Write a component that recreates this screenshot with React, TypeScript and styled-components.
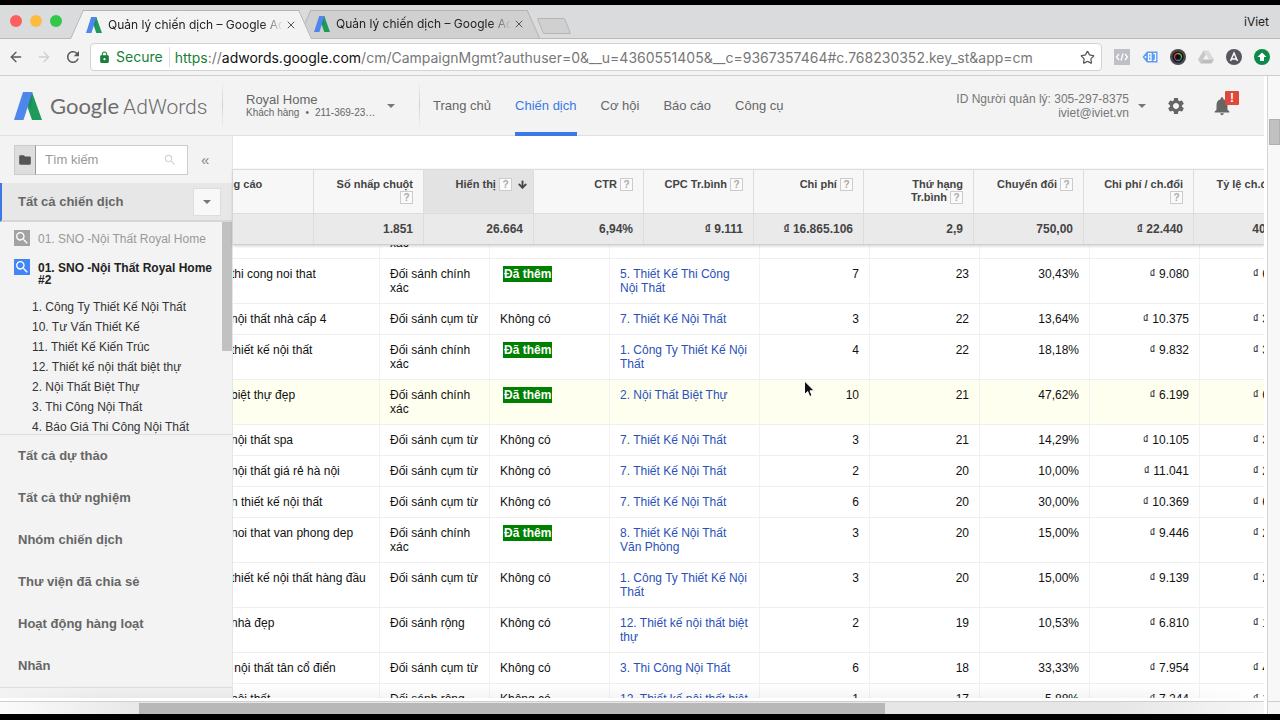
import React from "react";
import styled, { createGlobalStyle, css } from "styled-components";
import { ArrowDown, ArrowLeft, ArrowRight, Star, X } from "lucide-react";
import { MdFolder, MdLock, MdNotifications, MdRefresh, MdSearch, MdSettings } from "react-icons/md";

const GlobalStyle = createGlobalStyle`
  * { box-sizing: border-box; }
  body { margin: 0; background: #000; font-family: "Liberation Sans", Arial, sans-serif; font-size: 12px; }
  button, input { font-family: inherit; }
  button { padding: 0; border: 0; background: none; color: inherit; }
  a { text-decoration: none; color: inherit; }
  svg { display: block; flex: none; }
`;

const BLUE = "#3b78e7";
const UI_FONT = `Inter, "Liberation Sans", sans-serif`;

/* ---------- browser chrome ---------- */

const Screen = styled.div`
  display: flex;
  flex-direction: column;
  height: 100vh;
  padding: 5px 0 6px;
  background: #000;
  overflow: hidden;
`;

const TabStrip = styled.div`
  display: flex;
  flex: none;
  align-items: flex-end;
  height: 34px;
  padding: 0 11px 0 10px;
  background: #dadbdd;
  border-bottom: 1px solid #b9b9b9;
  font-family: ${UI_FONT};
`;

const Lights = styled.div`
  display: flex;
  gap: 8px;
  width: 60px;
  height: 23px;
`;

const Light = styled.button<{ $color: string }>`
  width: 12px;
  height: 12px;
  border-radius: 50%;
  background: ${(p) => p.$color};
`;

const Tab = styled.div<{ $active?: boolean }>`
  position: relative;
  z-index: ${(p) => (p.$active ? 2 : 1)};
  display: flex;
  align-items: center;
  gap: 6px;
  width: 242px;
  height: ${(p) => (p.$active ? "29px" : "28px")};
  padding: 0 15px 0 16px;
  margin-bottom: ${(p) => (p.$active ? "-1px" : 0)};
  color: #222;

  & + & { margin-left: -14px; }

  &::before, &::after {
    content: "";
    position: absolute;
    z-index: -1;
    top: 0;
    bottom: 0;
    width: 50%;
    background: ${(p) => (p.$active ? "#f3f3f3" : "#d0d0d0")};
    border-top: 1px solid #b4b4b4;
  }
  &::before { left: 0; border-left: 1px solid #b4b4b4; transform: skewX(-24deg); transform-origin: bottom; }
  &::after { right: 0; border-right: 1px solid #b4b4b4; transform: skewX(24deg); transform-origin: bottom; }
`;

const TabTitle = styled.span`
  flex: 1;
  min-width: 0;
  overflow: hidden;
  white-space: nowrap;
  font-size: 12px;
  line-height: 16px;
  mask-image: linear-gradient(90deg, #000 88%, transparent);
`;

const TabClose = styled.button`
  margin-left: -4px;
  color: #555;
`;

const NewTab = styled.button`
  width: 28px;
  height: 16px;
  margin: 0 0 4px;
  background: #d0d0d0;
  border: 1px solid #b4b4b4;
  border-radius: 2px;
  transform: skewX(22deg);
`;

const Profile = styled.button`
  margin-left: auto;
  height: 33px;
  font-size: 12px;
  color: #222;
`;

const Toolbar = styled.div`
  display: flex;
  flex: none;
  align-items: center;
  gap: 12px;
  height: 37px;
  padding: 0 10px 0 8px;
  background: #f3f3f3;
  border-bottom: 1px solid #cfcfcf;
  font-family: ${UI_FONT};
`;

const ToolButton = styled.button<{ $dim?: boolean }>`
  color: ${(p) => (p.$dim ? "#d0d0d0" : "#5a5a5a")};
`;

const Address = styled.div`
  display: flex;
  flex: 1;
  align-items: center;
  min-width: 0;
  height: 28px;
  margin-left: -4px;
  padding: 0 6px 0 7px;
  background: #fff;
  border: 1px solid #d3d3d3;
  border-radius: 4px;
  font-size: 14px;
  color: #777;
`;

const Secure = styled.span`
  margin-left: 5px;
  padding-right: 6px;
  border-right: 1px solid #ddd;
  color: #188038;
  line-height: 20px;
`;

const Url = styled.span`
  flex: 1;
  min-width: 0;
  margin-left: 5px;
  overflow: hidden;
  white-space: nowrap;
  b { font-weight: 400; color: #111; }
  i { font-style: normal; color: #188038; }
`;

/* ---------- page frame ---------- */

const Viewport = styled.div`
  display: grid;
  flex: 1;
  min-height: 0;
  grid-template-columns: minmax(0, 1fr) 13px;
  grid-template-rows: minmax(0, 1fr) 13px;
  background: #fff;
`;

const Page = styled.div`
  position: relative;
  display: flex;
  flex-direction: column;
  margin: 0 3px 3px 0;
  overflow: hidden;
`;

const VTrack = styled.div`
  border-left: 1px solid #d4d4d4;
  background: #f8f8f8;
  padding-top: 43px;
`;

const VThumb = styled.div`
  height: 26px;
  margin-left: 1px;
  background: #c1c1c1;
  border: 1px solid #b0b0b0;
`;

const HTrack = styled.div`
  margin-right: 3px;
  border-top: 1px solid #cfcfcf;
  background: linear-gradient(90deg, #fbfbfb, #e6e6e6 12%, #e6e6e6 88%, #f6f6f6);
`;

const HThumb = styled.div`
  width: 59%;
  height: 11px;
  margin: 1px 0 0 11%;
  background: #b8b8b8;
`;

const Corner = styled.div`
  border-top: 1px solid #cfcfcf;
  border-left: 1px solid #cfcfcf;
  background: #f6f6f6;
`;

/* ---------- application header ---------- */

const Header = styled.header`
  display: flex;
  flex: none;
  height: 60px;
  background: #f3f3f3;
  border-bottom: 1px solid #e0e0e0;
  color: #666;
`;

const Divider = styled.div`
  width: 1px;
  margin: 4px 0 6px;
  background: linear-gradient(#f3f3f3, #d2d2d2 50%, #f3f3f3);
`;

const Brand = styled.a`
  display: flex;
  align-items: center;
  gap: 8px;
  width: 222px;
  padding-left: 14px;
  color: #6c6c6c;
  white-space: nowrap;
`;

const BrandName = styled.span`
  display: flex;
  align-items: baseline;
  gap: 4px;
`;

const Google = styled.span`
  font-family: Lato, sans-serif;
  font-size: 22px;
  line-height: 28px;
`;

const Product = styled.span`
  font-family: Roboto, sans-serif;
  font-size: 21px;
  font-weight: 300;
`;

const Account = styled.button`
  display: flex;
  align-items: center;
  justify-content: space-between;
  width: 196px;
  padding: 0 24px 0 23px;
  text-align: left;
`;

const AccountName = styled.span`
  display: block;
  font-size: 13px;
  line-height: 14px;
`;

const AccountMeta = styled.span`
  display: flex;
  gap: 6px;
  font-size: 10px;
  line-height: 12px;
`;

const Caret = styled.span`
  flex: none;
  border: 4px solid transparent;
  border-top: 4px solid #777;
  border-bottom: 0;
`;

const MainNav = styled.nav`
  display: flex;
  gap: 24px;
  padding-left: 13px;
  margin-bottom: -1px;
`;

const MainLink = styled.a<{ $active?: boolean }>`
  display: flex;
  align-items: center;
  padding-top: 3px;
  font-size: 13px;
  border-bottom: 4px solid ${(p) => (p.$active ? BLUE : "transparent")};
  color: ${(p) => (p.$active ? BLUE : "#666")};
`;

const Manager = styled.button`
  display: flex;
  align-items: center;
  gap: 9px;
  margin-left: auto;
  color: #777;
  font-size: 12px;
  line-height: 14px;
  text-align: right;
`;

const IconButton = styled.button`
  position: relative;
  width: 20px;
  margin-left: 20px;
  color: #666;
  & + & { margin: 0 33px 0 25px; }
`;

const Alert = styled.span`
  position: absolute;
  top: 15px;
  right: -8px;
  width: 14px;
  height: 14px;
  border-radius: 1px;
  background: #e0483c;
  color: #fff;
  font-weight: 700;
  font-size: 12px;
  line-height: 14px;
`;

/* ---------- sidebar ---------- */

const Body = styled.div`
  display: flex;
  flex: 1;
  min-height: 0;
`;

const Sidebar = styled.aside`
  display: flex;
  flex-direction: column;
  flex: none;
  width: 233px;
  background: #f3f3f3;
  border-right: 1px solid #e6e6e6;
`;

const SearchRow = styled.div`
  display: flex;
  align-items: center;
  flex: none;
  height: 47px;
  padding: 0 0 0 14px;
  color: #888;
`;

const FolderButton = styled.button`
  display: grid;
  place-items: center;
  width: 22px;
  height: 30px;
  background: #dedede;
  border: 1px solid #ccc;
  border-right-color: #999;
  color: #555;
`;

const SearchBox = styled.label`
  display: flex;
  align-items: center;
  width: 152px;
  height: 30px;
  padding: 0 10px 0 9px;
  background: #fff;
  border: 1px solid #ccc;
  border-left: 0;
  color: #d5d5d5;
`;

const SearchInput = styled.input`
  flex: 1;
  min-width: 0;
  padding: 0;
  border: 0;
  outline: 0;
  background: none;
  font-size: 13px;
  &::placeholder { color: #999; opacity: 1; }
`;

const Collapse = styled.button`
  margin-left: 13px;
  font-size: 15px;
  line-height: 20px;
`;

const Selected = styled.div`
  display: flex;
  flex: none;
  align-items: center;
  justify-content: space-between;
  height: 39px;
  padding: 0 11px 0 16px;
  background: #e7e7e7;
  border-left: 2px solid ${BLUE};
  border-bottom: 2px solid #d6d6d6;
  font-size: 13px;
  font-weight: 700;
  color: #666;
`;

const MenuButton = styled.button`
  display: grid;
  place-items: center;
  width: 28px;
  height: 28px;
  background: #f8f8f8;
  border: 1px solid #ddd;
`;

const Tree = styled.div`
  display: flex;
  flex: none;
  height: 213px;
  overflow: hidden;
  border-bottom: 1px solid #dedede;
`;

const TreeItems = styled.div`
  flex: 1;
  padding: 8px 6px 0 14px;
`;

const TreeThumb = styled.div`
  width: 10px;
  height: 129px;
  background: #c1c1c1;
`;

const Campaign = styled.a<{ $current?: boolean }>`
  display: flex;
  gap: 8px;
  margin-bottom: ${(p) => (p.$current ? "11px" : "12px")};
  line-height: ${(p) => (p.$current ? "12px" : "16px")};
  font-weight: ${(p) => (p.$current ? 700 : 400)};
  color: ${(p) => (p.$current ? "#222" : "#999")};
  span { padding-top: ${(p) => (p.$current ? "3px" : "1px")}; }
`;

const CampaignIcon = styled.i<{ $current?: boolean }>`
  display: grid;
  place-items: center;
  flex: none;
  width: 16px;
  height: 16px;
  background: ${(p) => (p.$current ? "#4285f4" : "#a3a3a3")};
  color: #fff;
`;

const Groups = styled.ul`
  list-style: none;
  margin: 0;
  padding: 0 0 0 18px;
  line-height: 20px;
  color: #333;
  white-space: nowrap;
`;

const SideLinks = styled.nav`
  flex: none;
  border-bottom: 1px solid #dedede;
`;

const SideLink = styled.a`
  display: block;
  padding-left: 18px;
  font-size: 13px;
  font-weight: 700;
  line-height: 42px;
  color: #666;
`;

/* ---------- report ---------- */

const Report = styled.main`
  flex: 1;
  min-width: 0;
  display: flex;
  flex-direction: column;
  padding-top: 33px;
  background: #fff;
`;

const HeadClip = styled.div`
  flex: none;
  position: relative;
  z-index: 1;
  overflow: hidden;
  border-top: 1px solid #ddd;
  border-bottom: 1px solid #cfcfcf;
  box-shadow: 0 1px 3px rgba(0, 0, 0, 0.2);
`;

const BodyClip = styled.div`
  flex: 1;
  min-height: 0;
  overflow: hidden;
`;

const tableBase = css`
  table-layout: fixed;
  border-collapse: separate;
  border-spacing: 0;
`;

const HeadTable = styled.table`
  ${tableBase}
  width: 1141px;
  margin-left: -70px;
  th, td { border-right: 1px solid #ddd; font-weight: 700; text-align: right; }
  th:first-child { text-align: left; }
`;

const HeadCell = styled.th<{ $sorted?: boolean }>`
  height: 44px;
  padding: 8px ${(p) => (p.$sorted ? "5px" : "10px")} 0 10px;
  vertical-align: top;
  font-size: 11px;
  line-height: 13px;
  color: #444;
  background: ${(p) => (p.$sorted ? "#e3e3e3" : "#f7f7f7")};
  border-bottom: 1px solid #ddd;
`;

const TotalCell = styled.td`
  height: 30px;
  padding: 0 10px;
  background: #eaeaea;
  color: #444;
`;

const Help = styled.button`
  display: inline-block;
  vertical-align: top;
  width: 13px;
  height: 13px;
  border: 1px solid #ccc;
  background: #fafafa;
  font-size: 10px;
  font-weight: 700;
  line-height: 11px;
  color: #aaa;
  text-align: center;
`;

const SortIcon = styled(ArrowDown)`
  display: inline-block;
  vertical-align: top;
  margin: 1px 0 0 5px;
`;

const DataTable = styled.table`
  ${tableBase}
  width: 1089px;
  margin: -31px 0 0 -12px;
`;

const Row = styled.tr<{ $hover?: boolean }>`
  background: ${(p) => (p.$hover ? "#fffff0" : "#fff")};
`;

const Cell = styled.td<{ $num?: boolean }>`
  padding: 8px 10px;
  vertical-align: top;
  text-align: ${(p) => (p.$num ? "right" : "left")};
  line-height: 14px;
  color: #111;
  border-right: 1px solid #f2f2f2;
  border-bottom: 1px solid #efefef;
  a { color: #2a51b8; }
`;

const Added = styled.strong`
  margin-left: 3px;
  padding: 1px;
  background: #008000;
  color: #fff;
`;

const Pointer = styled.svg`
  position: absolute;
  left: 803px;
  top: 304px;
`;

const BottomShade = styled.div`
  position: absolute;
  left: 0;
  right: 0;
  bottom: 0;
  height: 14px;
  background: linear-gradient(rgba(0, 0, 0, 0), rgba(0, 0, 0, 0.04));
  mask-image: linear-gradient(90deg, transparent, #000 8%, #000 92%, transparent);
  pointer-events: none;
`;

/* ---------- data ---------- */

const links = ["Trang chủ", "Chiến dịch", "Cơ hội", "Báo cáo", "Công cụ"];
const sideLinks = ["Tất cả dự thảo", "Tất cả thử nghiệm", "Nhóm chiến dịch", "Thư viện đã chia sẻ", "Hoạt động hàng loạt", "Nhãn"];
const groups = [
  "1. Công Ty Thiết Kế Nội Thất",
  "10. Tư Vấn Thiết Kế",
  "11. Thiết Kế Kiến Trúc",
  "12. Thiết kế nội thất biệt thự",
  "2. Nội Thất Biệt Thự",
  "3. Thi Công Nội Thất",
  "4. Báo Giá Thi Công Nội Thất",
];

const metrics: [string, string][] = [
  ["Số nhấp chuột", "1.851"],
  ["Hiển thị", "26.664"],
  ["CTR", "6,94%"],
  ["CPC Tr.bình", "₫ 9.111"],
  ["Chi phí", "₫ 16.865.106"],
  ["Thứ hạng Tr.bình", "2,9"],
  ["Chuyển đổi", "750,00"],
  ["Chi phí / ch.đổi", "₫ 22.440"],
  ["Tỷ lệ ch.đổi", "40,52%"],
];

const EXACT = "Đối sánh chính xác";
const PHRASE = "Đối sánh cụm từ";
const BROAD = "Đối sánh rộng";

type Term = [string, string, boolean | null, string, string, string, string, string, string];
const terms: Term[] = [
  ["", EXACT, null, "", "", "", "", "", ""],
  ["thi cong noi that", EXACT, true, "5. Thiết Kế Thi Công Nội Thất", "7", "23", "30,43%", "₫ 9.080", "₫ 63.562"],
  ["nội thất nhà cấp 4", PHRASE, false, "7. Thiết Kế Nội Thất", "3", "22", "13,64%", "₫ 10.375", "₫ 31.124"],
  ["thiết kế nội thất", EXACT, true, "1. Công Ty Thiết Kế Nội Thất", "4", "22", "18,18%", "₫ 9.832", "₫ 39.330"],
  ["biệt thự đẹp", EXACT, true, "2. Nội Thất Biệt Thự", "10", "21", "47,62%", "₫ 6.199", "₫ 61.991"],
  ["nội thất spa", PHRASE, false, "7. Thiết Kế Nội Thất", "3", "21", "14,29%", "₫ 10.105", "₫ 30.316"],
  ["nội thất giá rẻ hà nội", PHRASE, false, "7. Thiết Kế Nội Thất", "2", "20", "10,00%", "₫ 11.041", "₫ 22.082"],
  ["n thiết kế nội thất", PHRASE, false, "7. Thiết Kế Nội Thất", "6", "20", "30,00%", "₫ 10.369", "₫ 62.213"],
  ["noi that van phong dep", EXACT, true, "8. Thiết Kế Nội Thất Văn Phòng", "3", "20", "15,00%", "₫ 9.446", "₫ 28.339"],
  ["thiết kế nội thất hàng đầu", PHRASE, false, "1. Công Ty Thiết Kế Nội Thất", "3", "20", "15,00%", "₫ 9.139", "₫ 27.418"],
  ["nhà đẹp", BROAD, false, "12. Thiết kế nội thất biệt thự", "2", "19", "10,53%", "₫ 6.810", "₫ 13.620"],
  ["\u00a0nội thất tân cổ điển", PHRASE, false, "3. Thi Công Nội Thất", "6", "18", "33,33%", "₫ 7.954", "₫ 47.724"],
  ["nội thất", BROAD, false, "12. Thiết kế nội thất biệt thự", "1", "17", "5,88%", "₫ 7.244", "₫ 17.244"],
];

/* ---------- drawings ---------- */

const AdWordsMark = ({ size }: { size: number }) => (
  <svg width={size} height={size} viewBox="0 0 28 28" aria-hidden="true">
    <path d="M10 0h8l10 28H18L12 11z" fill="#1e9b5c" />
    <path d="M9 0h9.500L9.500 28H0z" fill="#4e86ec" />
    <path d="M18.300 0.500L14 13.500l3 3z" fill="#0f7a4c" opacity="0.400" />
  </svg>
);

const Extensions = () => (
  <>
    <ToolButton aria-label="Code">
      <svg width="16" height="16" viewBox="0 0 16 16">
        <rect width="16" height="16" fill="#bfc0c6" />
        <path d="M5 5L2.500 8 5 11M11 5l2.500 3L11 11M9 4.500L7 11.500" fill="none" stroke="#fff" strokeWidth="1.300" />
      </svg>
    </ToolButton>
    <ToolButton aria-label="Tag Assistant">
      <svg width="16" height="16" viewBox="0 0 16 16">
        <path d="M0.500 8L5 2.500h10.500v11H5z" fill="#5c9df2" />
        <circle cx="3.500" cy="8" r="0.900" fill="#fff" />
        <path d="M6.500 4.700h2.500v6.600h-2.500zM6.500 8h3M11.500 4.700h2v6.600h-2" fill="none" stroke="#fff" strokeWidth="1.200" />
      </svg>
    </ToolButton>
    <ToolButton aria-label="Camera">
      <svg width="16" height="16" viewBox="0 0 16 16">
        <circle cx="8" cy="8" r="8" fill="#4a4a4d" />
        <circle cx="8" cy="8" r="5.500" fill="#111" />
        <path d="M4.500 8a3.500 3.500 0 0 1 3.500-3.500" fill="none" stroke="#d8483a" strokeWidth="1.300" />
        <path d="M8 4.500a3.500 3.500 0 0 1 3.500 3.500" fill="none" stroke="#8fae3c" strokeWidth="1.300" />
        <path d="M11.500 8a3.500 3.500 0 0 1-3.500 3.500" fill="none" stroke="#2a9a88" strokeWidth="1.300" />
        <path d="M8 11.500a3.500 3.500 0 0 1-3.500-3.500" fill="none" stroke="#9a3fb0" strokeWidth="1.300" />
      </svg>
    </ToolButton>
    <ToolButton aria-label="Drive">
      <svg width="16" height="16" viewBox="0 0 16 16">
        <path d="M5.500 1.500h5L16 10.500h-5z" fill="#dadada" />
        <path d="M5.500 1.500L0 10.500 2.500 14.500 8 5.500z" fill="#c8c8c8" />
        <path d="M5 10.500h11l-2.500 4h-11z" fill="#bdbdbd" />
      </svg>
    </ToolButton>
    <ToolButton aria-label="Analytics">
      <svg width="16" height="16" viewBox="0 0 16 16">
        <circle cx="8" cy="8" r="8" fill="#57585f" />
        <path d="M4.500 12L8 4l3.500 8M5.500 10h5" fill="none" stroke="#fff" strokeWidth="1.400" />
      </svg>
    </ToolButton>
    <ToolButton aria-label="Upload">
      <svg width="16" height="16" viewBox="0 0 16 16">
        <circle cx="8" cy="8" r="8" fill="#0b8a4b" />
        <path d="M8 3.500l4.500 4.500H10v4H6V8H3.500z" fill="#fff" />
      </svg>
    </ToolButton>
  </>
);

const BrowserTab = ({ active }: { active?: boolean }) => (
  <Tab $active={active}>
    <AdWordsMark size={16} />
    <TabTitle>Quản lý chiến dịch – Google AdWords</TabTitle>
    <TabClose aria-label="Close tab">
      <X size={12} strokeWidth={2} />
    </TabClose>
  </Tab>
);

export default function App() {
  return (
    <Screen>
      <GlobalStyle />
      <TabStrip>
        <Lights>
          <Light $color="#fc605c" aria-label="Close" />
          <Light $color="#fdbc40" aria-label="Minimise" />
          <Light $color="#34c84a" aria-label="Zoom" />
        </Lights>
        <BrowserTab active />
        <BrowserTab />
        <NewTab aria-label="New tab" />
        <Profile>iViet</Profile>
      </TabStrip>
      <Toolbar>
        <ToolButton aria-label="Back"><ArrowLeft size={16} /></ToolButton>
        <ToolButton aria-label="Forward" $dim><ArrowRight size={16} /></ToolButton>
        <ToolButton aria-label="Reload"><MdRefresh size={18} /></ToolButton>
        <Address>
          <MdLock size={13} color="#188038" />
          <Secure>Secure</Secure>
          <Url>
            <i>https</i>://<b>adwords.google.com</b>/cm/CampaignMgmt?authuser=0&amp;__u=4360551405&amp;__c=9367357464#c.768230352.key_st&amp;app=cm
          </Url>
          <ToolButton aria-label="Bookmark"><Star size={15} /></ToolButton>
        </Address>
        <Extensions />
      </Toolbar>

      <Viewport>
        <Page>
          <Header>
            <Brand href="#">
              <AdWordsMark size={28} />
              <BrandName>
                <Google>Google</Google>
                <Product>AdWords</Product>
              </BrandName>
            </Brand>
            <Divider />
            <Account>
              <span>
                <AccountName>Royal Home</AccountName>
                <AccountMeta>
                  <span>Khách hàng</span>
                  <span>•</span>
                  <span>211-369-23…</span>
                </AccountMeta>
              </span>
              <Caret />
            </Account>
            <Divider />
            <MainNav>
              {links.map((label) => (
                <MainLink key={label} href="#" $active={label === "Chiến dịch"}>{label}</MainLink>
              ))}
            </MainNav>
            <Manager>
              <span>
                ID Người quản lý: 305-297-8375
                <br />
                iviet@iviet.vn
              </span>
              <Caret />
            </Manager>
            <IconButton aria-label="Cài đặt"><MdSettings size={20} /></IconButton>
            <IconButton aria-label="Thông báo">
              <MdNotifications size={22} />
              <Alert>!</Alert>
            </IconButton>
          </Header>

          <Body>
            <Sidebar>
              <SearchRow>
                <FolderButton aria-label="Thư mục"><MdFolder size={14} /></FolderButton>
                <SearchBox>
                  <SearchInput type="text" placeholder="Tìm kiếm" aria-label="Tìm kiếm" />
                  <MdSearch size={14} />
                </SearchBox>
                <Collapse>«</Collapse>
              </SearchRow>
              <Selected>
                Tất cả chiến dịch
                <MenuButton aria-label="Menu"><Caret /></MenuButton>
              </Selected>
              <Tree>
                <TreeItems>
                  <Campaign href="#">
                    <CampaignIcon><MdSearch size={16} /></CampaignIcon>
                    <span>01. SNO -Nội Thất Royal Home</span>
                  </Campaign>
                  <Campaign href="#" $current>
                    <CampaignIcon $current><MdSearch size={16} /></CampaignIcon>
                    <span>01. SNO -Nội Thất Royal Home #2</span>
                  </Campaign>
                  <Groups>
                    {groups.map((name) => (
                      <li key={name}><a href="#">{name}</a></li>
                    ))}
                  </Groups>
                </TreeItems>
                <TreeThumb />
              </Tree>
              <SideLinks>
                {sideLinks.map((label) => (
                  <SideLink key={label} href="#">{label}</SideLink>
                ))}
              </SideLinks>
            </Sidebar>

            <Report>
              <HeadClip>
                <HeadTable>
                  <colgroup>
                    <col width="151" />
                    {metrics.map(([name]) => <col key={name} width="110" />)}
                  </colgroup>
                  <thead>
                    <tr>
                      <HeadCell scope="col">Nhóm quảng cáo</HeadCell>
                      {metrics.map(([name]) => (
                        <HeadCell key={name} scope="col" $sorted={name === "Hiển thị"}>
                          {name} <Help aria-label={"Trợ giúp: " + name}>?</Help>
                          {name === "Hiển thị" && <SortIcon size={11} strokeWidth={4} />}
                        </HeadCell>
                      ))}
                    </tr>
                  </thead>
                  <tbody>
                    <tr>
                      <TotalCell />
                      {metrics.map(([name, total]) => <TotalCell key={name}>{total}</TotalCell>)}
                    </tr>
                  </tbody>
                </HeadTable>
              </HeadClip>
              <BodyClip>
                <DataTable>
                  <colgroup>
                    <col width="159" />
                    <col width="110" />
                    <col width="120" />
                    <col width="150" />
                    <col width="110" />
                    <col width="110" />
                    <col width="110" />
                    <col width="110" />
                    <col width="110" />
                  </colgroup>
                  <tbody>
                    {terms.map(([term, match, added, group, ...nums], i) => (
                      <Row key={i} $hover={term === "biệt thự đẹp"}>
                        <Cell>{term}</Cell>
                        <Cell>{match}</Cell>
                        <Cell>{added === null ? "" : added ? <Added>Đã thêm</Added> : "Không có"}</Cell>
                        <Cell><a href="#">{group}</a></Cell>
                        {nums.map((n, k) => <Cell key={k} $num>{n}</Cell>)}
                      </Row>
                    ))}
                  </tbody>
                </DataTable>
              </BodyClip>
            </Report>
          </Body>
          <Pointer width="14" height="20" viewBox="0 0 14 20" aria-hidden="true">
            <path d="M1.500 1v13.500l3.200-3 2 5 2.300-1-2-4.700h4.300z" fill="#111" stroke="#fff" strokeWidth="1" />
          </Pointer>
          <BottomShade />
        </Page>
        <VTrack><VThumb /></VTrack>
        <HTrack><HThumb /></HTrack>
        <Corner />
      </Viewport>
    </Screen>
  );
}
